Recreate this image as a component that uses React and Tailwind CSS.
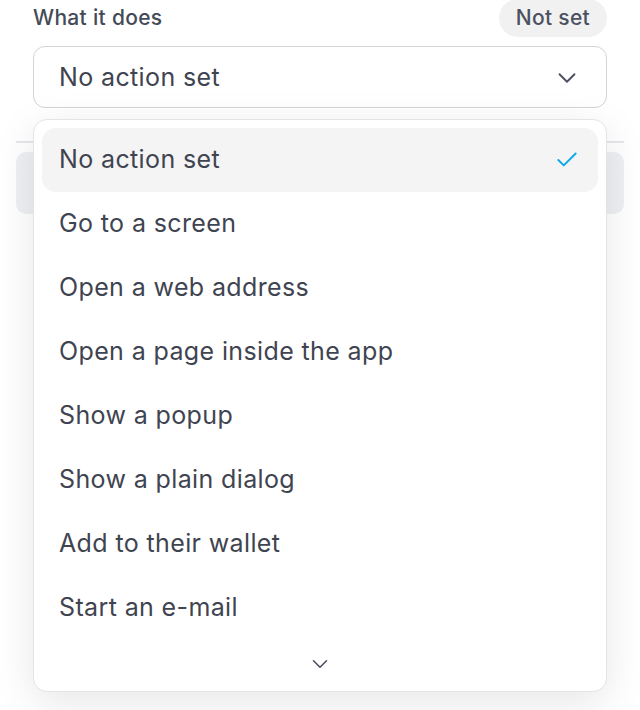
import { Check, ChevronDown } from 'lucide-react'

const options = [
  'No action set',
  'Go to a screen',
  'Open a web address',
  'Open a page inside the app',
  'Show a popup',
  'Show a plain dialog',
  'Add to their wallet',
  'Start an e-mail',
]

export default function App() {
  const selected = 'No action set'

  return (
    <div className="relative w-[640px] h-[710px] overflow-hidden bg-white font-['Inter','Noto_Sans',sans-serif] text-[#374151]">
      {/* Field */}
      <div className="px-[33px]">
        <div className="flex items-center justify-between h-[37px] -mt-[1px]">
          <span className="text-[21px] font-medium tracking-[0.015em] text-[#444a57]">What it does</span>
          <span className="px-[17px] h-[38px] flex items-center rounded-full bg-[#f1f1f2] text-[21px] font-medium tracking-[0.015em] text-[#4b5160]">
            Not set
          </span>
        </div>
        <button className="mt-[10px] w-full h-[62px] flex items-center justify-between pt-[2px] pl-[25px] pr-[24px] rounded-[12px] border-[1.5px] border-[#d4d4d8] bg-white text-[25px] tracking-[0.015em] text-[#3f4451]">
          No action set
          <ChevronDown className="w-[30px] h-[30px] text-[#4b5160]" strokeWidth={1.5} />
        </button>
      </div>

      {/* Content under the menu */}
      <div className="px-4 mt-[33px]">
        <div className="h-[2px] bg-[#e5e7eb]" />
        <div className="mt-[9px] h-[62px] rounded-[10px] bg-[#eef0f3]" />
      </div>

      {/* Dropdown menu */}
      <div className="absolute left-[33px] top-[119px] w-[574px] h-[573px] rounded-[14px] border border-[#e4e4e7] bg-white p-[8px] shadow-[0_10px_40px_rgba(0,0,0,0.10)]">
        <ul>
          {options.map((label) => {
            const active = label === selected
            return (
              <li
                key={label}
                className={`h-[64px] flex items-center justify-between pl-[17px] pr-[18px] rounded-[14px] text-[25px] tracking-[0.015em] text-[#3f4451] ${active ? 'bg-[#f4f4f5]' : ''}`}
              >
                {label}
                {active && <Check className="w-[26px] h-[26px] text-[#0ea5e9]" strokeWidth={1.75} />}
              </li>
            )
          })}
        </ul>
        <div className="flex justify-center pt-[11px]">
          <ChevronDown className="w-[26px] h-[26px] text-[#4b5160]" strokeWidth={1.5} />
        </div>
      </div>
    </div>
  )
}
